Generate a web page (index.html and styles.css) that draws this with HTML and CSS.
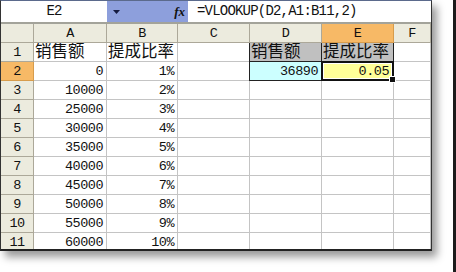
FILE: index.html
```html
<!DOCTYPE html>
<html lang="zh-CN">
<head>
  <meta charset="UTF-8" />
  <title>VLOOKUP</title>
  <link rel="stylesheet" href="styles.css">
</head>
<body>

  <div class="sheet">
    <div class="formula-bar">
      <div class="name-box">E2</div>
      <div class="name-drop">
        <svg class="arrow" width="7" height="4" viewBox="0 0 7 4"><path d="M0 0H7L3.5 4Z" fill="#141a40"/></svg>
        <span class="fx">fx</span>
      </div>
      <div class="formula">=VLOOKUP(D2,A1:B11,2)</div>
    </div>

    <div class="grid">
      <div class="hd corner"></div>
      <div class="hd">A</div>
      <div class="hd">B</div>
      <div class="hd">C</div>
      <div class="hd">D</div>
      <div class="hd active">E</div>
      <div class="hd">F</div>

      <div class="hd rh">1</div>
      <div class="c zh">销售额</div>
      <div class="c zh">提成比率</div>
      <div class="c"></div>
      <div class="c zh lookup-head">销售额</div>
      <div class="c zh lookup-head">提成比率</div>
      <div class="c"></div>

      <div class="hd rh active">2</div>
      <div class="c num">0</div>
      <div class="c num">1%</div>
      <div class="c"></div>
      <div class="c num lookup-in">36890</div>
      <div class="c num lookup-out">0.05<span class="handle"></span></div>
      <div class="c"></div>

      <div class="hd rh">3</div>
      <div class="c num">10000</div>
      <div class="c num">2%</div>
      <div class="c"></div><div class="c"></div><div class="c"></div><div class="c"></div>

      <div class="hd rh">4</div>
      <div class="c num">25000</div>
      <div class="c num">3%</div>
      <div class="c"></div><div class="c"></div><div class="c"></div><div class="c"></div>

      <div class="hd rh">5</div>
      <div class="c num">30000</div>
      <div class="c num">4%</div>
      <div class="c"></div><div class="c"></div><div class="c"></div><div class="c"></div>

      <div class="hd rh">6</div>
      <div class="c num">35000</div>
      <div class="c num">5%</div>
      <div class="c"></div><div class="c"></div><div class="c"></div><div class="c"></div>

      <div class="hd rh">7</div>
      <div class="c num">40000</div>
      <div class="c num">6%</div>
      <div class="c"></div><div class="c"></div><div class="c"></div><div class="c"></div>

      <div class="hd rh">8</div>
      <div class="c num">45000</div>
      <div class="c num">7%</div>
      <div class="c"></div><div class="c"></div><div class="c"></div><div class="c"></div>

      <div class="hd rh">9</div>
      <div class="c num">50000</div>
      <div class="c num">8%</div>
      <div class="c"></div><div class="c"></div><div class="c"></div><div class="c"></div>

      <div class="hd rh">10</div>
      <div class="c num">55000</div>
      <div class="c num">9%</div>
      <div class="c"></div><div class="c"></div><div class="c"></div><div class="c"></div>

      <div class="hd rh">11</div>
      <div class="c num">60000</div>
      <div class="c num">10%</div>
      <div class="c"></div><div class="c"></div><div class="c"></div><div class="c"></div>
    </div>
  </div>

  <div class="edge"></div>

</body>
</html>
```

FILE: styles.css
```css
html, body {
  margin: 0;
  height: 272px;
  overflow: hidden;
}
body {
  display: flex;
  background: #fff;
  font-family: "Liberation Mono", "Noto Sans CJK SC", monospace;
  font-size: 13.5px;
  letter-spacing: -0.5px;
  color: #111;
}
.sheet {
  width: 432px;
  height: 251px;
  box-sizing: border-box;
  border-top: 1px solid #5b6a8c;
  border-left: 1px solid #333;
  border-right: 1px solid #333;
  border-bottom: 2px solid #222;
  background: #fff;
  box-shadow: 5px 6px 8px rgba(0,0,0,0.4);
  overflow: hidden;
}
.edge {
  margin-left: auto;
  width: 3px;
  height: 272px;
  background: #1c1c1c;
}

/* formula bar */
.formula-bar {
  display: flex;
  height: 21px;
  border-bottom: 2px solid #a3a39a;
  line-height: 21px;
  font-size: 14px;
  letter-spacing: -0.8px;
}
.name-box {
  width: 106px;
  text-align: center;
  background: #fff;
}
.name-drop {
  width: 81px;
  display: flex;
  justify-content: space-between;
  align-items: center;
  padding: 0 3px 0 6px;
  box-sizing: border-box;
  background: #8d9fdc;
}
.fx {
  font-family: "Liberation Serif", serif;
  font-style: italic;
  font-weight: bold;
  font-size: 13px;
  letter-spacing: 0;
  color: #111;
}
.formula {
  flex: 1;
  padding-left: 9px;
  background: #fff;
}

/* grid */
.grid {
  display: grid;
  grid-template-columns: 33px 73px 71px 72px 72px 72px 37px;
  grid-auto-rows: 19px;
}
.hd, .c {
  box-sizing: border-box;
  border-right: 1px solid #c4c4c4;
  border-bottom: 1px solid #c4c4c4;
  line-height: 20px;
  overflow: hidden;
  white-space: nowrap;
}
.hd {
  background: #ecebde;
  border-right-color: #aca899;
  border-bottom-color: #aca899;
  text-align: center;
}
.hd.active {
  background: #f7b966;
  border-color: #d79c4c;
}
.c {
  padding: 0 2px;
}
.num {
  text-align: right;
  padding-right: 3px;
}
.zh {
  font-size: 16.5px;
  letter-spacing: 0;
  line-height: 19px;
  padding-left: 1px;
}
.lookup-head {
  background: #c0c0c0;
  border-left: 1px solid #222;
  border-right-color: #222;
  border-bottom-color: #222;
  margin-left: -1px;
}
.lookup-in {
  background: #ccffff;
  border-left: 1px solid #222;
  border-right-color: #222;
  border-bottom-color: #222;
  margin-left: -1px;
}
.lookup-out {
  position: relative;
  overflow: visible;
  background: #ffff99;
  border: 2px solid #111;
  margin: -1px 0 0 -1px;
  box-shadow: inset 0 0 0 1px #fff;
  line-height: 18px;
}
.handle {
  position: absolute;
  right: -4px;
  bottom: -4px;
  width: 5px;
  height: 5px;
  background: #111;
  border: 1px solid #fff;
}
```
